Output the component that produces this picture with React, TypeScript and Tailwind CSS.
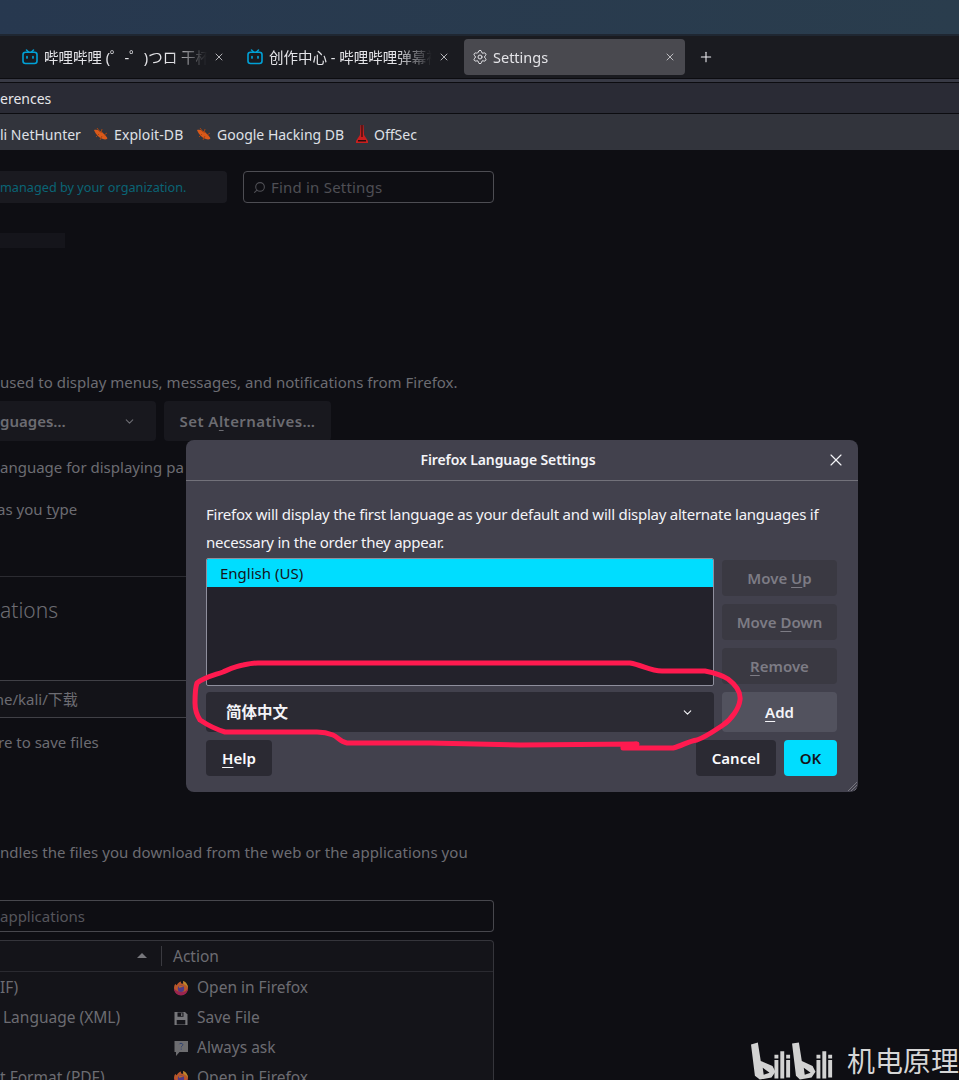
import { ChevronDown, Plus, Search, Settings, X } from "lucide-react";
import type { ReactNode } from "react";

const BiliTv = () => (
  <svg width="16" height="16" viewBox="0 0 16 16" fill="none" className="shrink-0">
    <path d="M4.5 1 L6.5 3 M11.5 1 L9.5 3" stroke="#00a1d6" strokeWidth="1.5" strokeLinecap="round" />
    <rect x="1" y="3.2" width="14" height="11.3" rx="2.5" stroke="#00a1d6" strokeWidth="1.6" />
    <path d="M5 7.5v1.5M11 7.5v1.5" stroke="#00a1d6" strokeWidth="1.7" strokeLinecap="round" />
  </svg>
);

const Bug = () => (
  <svg width="16" height="14" viewBox="0 0 16 14" className="shrink-0">
    <path d="M1 3 C4 2 8 4 11 7 C13 9 15 11 14 12 C12 13 9 12 6 10 C4 8 2 6 1 3Z" fill="#d8591a" />
    <path d="M4 1 L7 5 M9 2 L8 6 M3 10 L6 7 M7 13 L9 9 M14 6 L11 8" stroke="#a8430f" strokeWidth="1" />
  </svg>
);

const OffSecIcon = () => (
  <svg width="14" height="20" viewBox="0 0 14 20" className="shrink-0">
    <path d="M5.5 1h3l.6 10 3.9 6v2H1v-2l3.9-6z" fill="#c81e1e" />
    <path d="M6.4 1h1.2v12H6.4zM3 16h8v1.5H3z" fill="#2a0d0d" />
  </svg>
);

const FirefoxIcon = () => (
  <svg width="16" height="16" viewBox="0 0 16 16" className="shrink-0">
    <path d="M8 1.500c-.4 1.400.3 2 1.200 2.500C10.500 3.300 10.300 1.700 10 1c2.800 1 5 3.800 5 7 0 3.900-3.100 7-7 7s-7-3.100-7-7c0-1.500.4-2.800 1.200-3.900C3 4.500 3.400 5 3.800 5.300 4.300 3.500 6 2 8 1.500z" fill="#b9562a" />
    <path d="M1 8.500a7 7 0 0 0 14 0c-1.500 2.500-3.500 3.500-6 3.500-3 0-6-1-8-3.500z" fill="#9a2450" />
    <path d="M10 1c2.800 1 5 3.800 5 7-1-2-2.500-3.300-4.200-3.700z" fill="#b98a2c" />
    <circle cx="8" cy="8.700" r="3.200" fill="#4f3a86" />
    <path d="M5.500 6.500C7 5.500 9 5.700 10.500 7 9 6.900 7.500 7.200 6.500 8z" fill="#b9662a" />
  </svg>
);

const FloppyIcon = () => (
  <svg width="16" height="15" viewBox="0 0 15 15" className="shrink-0">
    <path d="M1 1h10.500L14 3.500V14H1z" fill="#77777b" />
    <path d="M4 1.500h6v4.200H4zM3.200 9h8.600v4.600H3.200z" fill="#15151a" />
    <path d="M7.600 2.300h1.300v2.600H7.600z" fill="#77777b" />
  </svg>
);

const AskIcon = () => (
  <svg width="16" height="17" viewBox="0 0 16 17" className="shrink-0">
    <path d="M1.500 1h13.500v11H6.500L3 16v-4H1.500z" fill="#6d6d70" />
    <path d="M6.300 4.200C6.600 3 9.600 2.800 9.800 4.600c.1 1.200-1.500 1.400-1.600 2.800M8.200 8.600v1" stroke="#2c3f70" strokeWidth="1" fill="none" />
  </svg>
);

// Logo mark at the corner of the capture, coordinates are local pixels
const BiliLogo = () => (
  <svg width="86" height="38" viewBox="0 0 88 38" className="shrink-0">
    <g fill="#d2d2d2">
      <path fillRule="evenodd" d="M0 2 L7 0 L10 19 L22 24 L25 30 L21 36 L9 38 L4 34z M12 26 L13 33 L19 31z" />
      <path d="M24 18h4v19h-4zM24 12.500h4v4h-4zM30 9h4v28h-4zM36 18h4v18h-4zM36 12.500h4v4h-4z" />
      <path fillRule="evenodd" d="M42 1 L49 0 L52 19 L63 24 L66 30 L62 36 L50 38 L46 34z M54 26 L55 33 L61 31z" />
      <path d="M67 18h4v19h-4zM67 12.500h4v4h-4zM73 9h4v28h-4zM79 18h4v18h-4zM79 12.500h4v4h-4z" />
    </g>
  </svg>
);

const HandDrawnLoop = () => (
  <svg viewBox="0 0 959 1080" className="absolute left-0 top-0 w-[959px] h-[1080px] pointer-events-none" fill="none">
    <path
      d="M258 663 L630 663 C642 665 650 671 662 671 L705 671 C715 673 722 675 728 679 C736 685 741 692 740 700 C739 708 732 719 723 725 C714 731 706 737 697 740 C688 741 682 746 673 748 L623 748 L623 745 L637 744 L520 745 L430 743 L347 743 C340 742 338 737 333 735 C328 733 322 732 317 732 L225 732 C215 729 206 724 200 720 C196 714 195 708 195 703 C195 696 195 688 197 683 C205 677 215 675 223 672 C230 669 236 666 243 665 C248 664 253 663 258 663 Z"
      stroke="#ff1a4f"
      strokeWidth="5"
      strokeLinejoin="round"
    />
  </svg>
);

const Tab = ({ title, icon, active }: { title: string; icon: ReactNode; active?: boolean }) => (
  <div
    className={`w-[221px] h-[36px] shrink-0 rounded-[4px] flex items-center gap-[6px] pl-[9px] pr-[9px] text-[14.500px] text-[#e4e4e8] ${
      active ? "bg-[#49494f]" : ""
    }`}
  >
    {icon}
    <span className="flex-1 min-w-0 pt-[2px] overflow-hidden whitespace-nowrap [mask-image:linear-gradient(to_left,transparent,black_36px)]">
      {title}
    </span>
    <X size={12} strokeWidth={1.6} className="shrink-0 text-[#d8d8dc]" />
  </div>
);

const DialogButton = ({ children, disabled, className }: { children: ReactNode; disabled?: boolean; className?: string }) => (
  <div
    className={`rounded-[4px] flex items-center justify-center font-semibold text-[15px] ${
      disabled ? "bg-[#3a3942] text-[#7d7c85]" : "bg-[#2b2a33] text-[#fbfbfe]"
    } ${className ?? ""}`}
  >
    <span>{children}</span>
  </div>
);

const U = ({ children }: { children: ReactNode }) => <span className="underline underline-offset-[3px]">{children}</span>;

const LanguageDialog = () => (
  <div className="absolute left-[186px] top-[440px] w-[672px] h-[352px] bg-[#42414d] rounded-[8px] text-[#f4f4f8] text-[15px] overflow-hidden">
    <div className="relative h-[41px] border-b border-[#72717a] flex items-center justify-center pr-[28px] pb-[2px] font-semibold text-[14px] tracking-[-0.1px]">
      Firefox Language Settings
      <X size={20} strokeWidth={1.4} className="absolute right-[12px] top-[10px]" />
    </div>
    <div className="px-[20px] pt-[19px]">
      <p className="leading-[28px] w-[632px] whitespace-pre-line tracking-[-0.25px]">
        {"Firefox will display the first language as your default and will display alternate languages if\nnecessary in the order they appear."}
      </p>
      <div className="mt-[2px] grid grid-cols-[508px_115px] gap-x-[8px]">
        <div className="h-[128px] bg-[#23222b] border border-[#8f8f9d] rounded-[2px] overflow-hidden">
          <div className="h-[28px] bg-[#00ddff] text-[#15141a] pl-[13px] flex items-center">English (US)</div>
        </div>
        <div className="flex flex-col gap-[8px] pt-[2px]">
          <DialogButton disabled className="h-[36px]">Move <U>U</U>p</DialogButton>
          <DialogButton disabled className="h-[36px]">Move <U>D</U>own</DialogButton>
          <DialogButton disabled className="h-[36px]"><U>R</U>emove</DialogButton>
        </div>
        <div className="mt-[6px] h-[40px] bg-[#2b2a33] rounded-[4px] flex items-center justify-between pl-[20px] pr-[20px] font-semibold text-[15.500px]">
          <span className="pt-[2px]">简体中文</span>
          <ChevronDown size={13} strokeWidth={2} />
        </div>
        <div className="mt-[6px] h-[40px] bg-[#52525e] rounded-[4px] flex items-center justify-center font-semibold"><span><U>A</U>dd</span></div>
      </div>
      <div className="mt-[8px] flex justify-between">
        <DialogButton className="w-[66px] h-[36px]"><U>H</U>elp</DialogButton>
        <div className="flex gap-[8px] pr-[1px]">
          <DialogButton className="w-[80px] h-[36px]">Cancel</DialogButton>
          <div className="w-[53px] h-[36px] rounded-[4px] bg-[#00ddff] text-[#15141a] font-semibold flex items-center justify-center">OK</div>
        </div>
      </div>
    </div>
    <svg width="12" height="12" viewBox="0 0 12 12" className="absolute right-0 bottom-0" stroke="#77767f" strokeWidth="1">
      <path d="M11 2 L2 11 M11 5 L5 11 M11 8 L8 11" />
    </svg>
  </div>
);

const ActionRow = ({ type, icon, action }: { type: ReactNode; icon: ReactNode; action: string }) => (
  <div className="h-[30px] grid grid-cols-[173px_1fr] items-center">
    <span className="whitespace-nowrap">{type}</span>
    <span className="flex items-center gap-[8px]">
      {icon}
      {action}
    </span>
  </div>
);

const App = () => (
  <div className="relative w-[959px] h-[1080px] overflow-hidden bg-[#0e0e13] [font-family:'Noto_Sans','Noto_Sans_CJK_SC',sans-serif]">
    {/* window title strip */}
    <div className="h-[34px] bg-gradient-to-r from-[#27384f] to-[#2a3d4d] border-b-2 border-[#1f2732] box-content" />

    {/* tabs */}
    <div className="h-[42px] bg-[#1a1b20] flex items-center pl-[13px] gap-[4px]">
      <Tab title="哔哩哔哩 (゜-゜)つロ 干杯~-bilibili" icon={<BiliTv />} />
      <Tab title="创作中心 - 哔哩哔哩弹幕视频网" icon={<BiliTv />} />
      <div className="ml-[1px] -mr-[1px]">
        <Tab title="Settings" active icon={<Settings size={16} strokeWidth={1.5} className="shrink-0 -ml-[1px] -mr-[1px] text-[#e4e4e8]" />} />
      </div>
      <Plus size={16} strokeWidth={1.6} className="ml-[10px] text-[#f0f0f4]" />
    </div>
    <div className="h-[5px] bg-[#383a45] border-y border-[#0c0c10]" />

    {/* url bar */}
    <div className="h-[31px] bg-[#2a2b35] border-b border-[#0c0c10] flex items-center text-[14px] text-[#e6e6ea]">erences</div>

    {/* bookmarks */}
    <div className="h-[36px] pt-[4px] bg-[#32343c] flex items-center text-[14px] text-[#dfe0e6]">
      <span className="w-[93px] whitespace-nowrap">li NetHunter</span>
      <span className="w-[103px] flex items-center gap-[5px] tracking-[0.1px]"><Bug />Exploit-DB</span>
      <span className="w-[159px] flex items-center gap-[5px]"><Bug />Google Hacking DB</span>
      <span className="flex items-center gap-[5px]"><OffSecIcon />OffSec</span>
    </div>

    {/* dimmed settings page */}
    <div className="w-[494px] text-[15px] text-[#6c6c72] pt-[21px]">
      <div className="flex gap-[16px] h-[32px]">
        <div className="w-[227px] bg-[#1a1a20] rounded-r-[4px] pt-[2px] flex items-center text-[12.700px] text-[#0a6475] whitespace-nowrap overflow-hidden">
          managed by your organization.
        </div>
        <div className="flex-1 border border-[#4d4d53] rounded-[4px] flex items-center pl-[9px] gap-[5px] text-[#4f4f55] tracking-[0.2px]">
          <Search size={13} className="-scale-x-100" />
          Find in Settings
        </div>
      </div>
      <div className="mt-[30px] w-[65px] h-[15px] bg-[#15151b]" />
      <p className="mt-[124px] h-[20px] leading-[20px] whitespace-nowrap tracking-[0.03px]">used to display menus, messages, and notifications from Firefox.</p>
      <div className="mt-[9px] flex gap-[8px] h-[40px] font-semibold">
        <div className="w-[156px] bg-[#18181e] rounded-r-[4px] flex items-center justify-between pr-[20px]">
          guages…
          <ChevronDown size={13} />
        </div>
        <div className="w-[167px] bg-[#18181e] rounded-[4px] flex items-center justify-center tracking-[0.45px]">
          <span>Set A<U>l</U>ternatives…</span>
        </div>
      </div>
      <p className="mt-[16px] h-[20px] leading-[20px] w-[186px] overflow-hidden whitespace-nowrap">anguage for displaying pa</p>
      <p className="mt-[22px] h-[20px] leading-[20px] -ml-[3px]">as you <U>t</U>ype</p>
      <div className="mt-[57px] h-px bg-[#2b2b31]" />
      <p className="mt-[19px] h-[28px] leading-[28px] text-[21px] font-light">ations</p>
      <div className="mt-[56px] h-[38px] w-[186px] border-y border-[#404046] bg-[#131318] flex items-center overflow-hidden">
        <span className="-ml-[10px] whitespace-nowrap">me/kali/下载</span>
      </div>
      <p className="mt-[14px] h-[20px] leading-[20px] -ml-[2px]">re to save files</p>
      <p className="mt-[90px] h-[20px] leading-[20px] whitespace-nowrap tracking-[0.05px]">ndles the files you download from the web or the applications you</p>
      <div className="mt-[38px] h-[32px] border border-[#47474d] border-l-0 rounded-r-[4px] flex items-center text-[#55555b]">applications</div>
      <div className="mt-[8px] border border-[#35353b] border-l-0 rounded-tr-[4px] bg-[#141419] text-[15.500px]">
        <div className="h-[31px] pb-[1px] border-b border-[#2a2a30] flex items-center">
          <div className="w-[162px] h-[20px] border-r border-[#3a3a40] flex items-center justify-end pr-[14px]">
            <svg width="10" height="5" viewBox="0 0 10 5"><path d="M0 5 L5 0 L10 5Z" fill="#77777c" /></svg>
          </div>
          <span className="pl-[11px] pt-[2px]">Action</span>
        </div>
        <div className="pt-[1px]">
          <ActionRow type="IF)" icon={<FirefoxIcon />} action="Open in Firefox" />
          <ActionRow type={<span className="pl-[3px]">Language (XML)</span>} icon={<FloppyIcon />} action="Save File" />
          <ActionRow type="" icon={<AskIcon />} action="Always ask" />
          <ActionRow type="t Format (PDF)" icon={<FirefoxIcon />} action="Open in Firefox" />
        </div>
      </div>
    </div>

    <LanguageDialog />
    <HandDrawnLoop />

    {/* watermark */}
    <div className="absolute right-0 bottom-0 h-[38px] flex items-center gap-[10px] text-[28px] leading-none text-[#d6d6d6] whitespace-nowrap">
      <BiliLogo />
      <span>机电原理</span>
    </div>
  </div>
);

export default App;
